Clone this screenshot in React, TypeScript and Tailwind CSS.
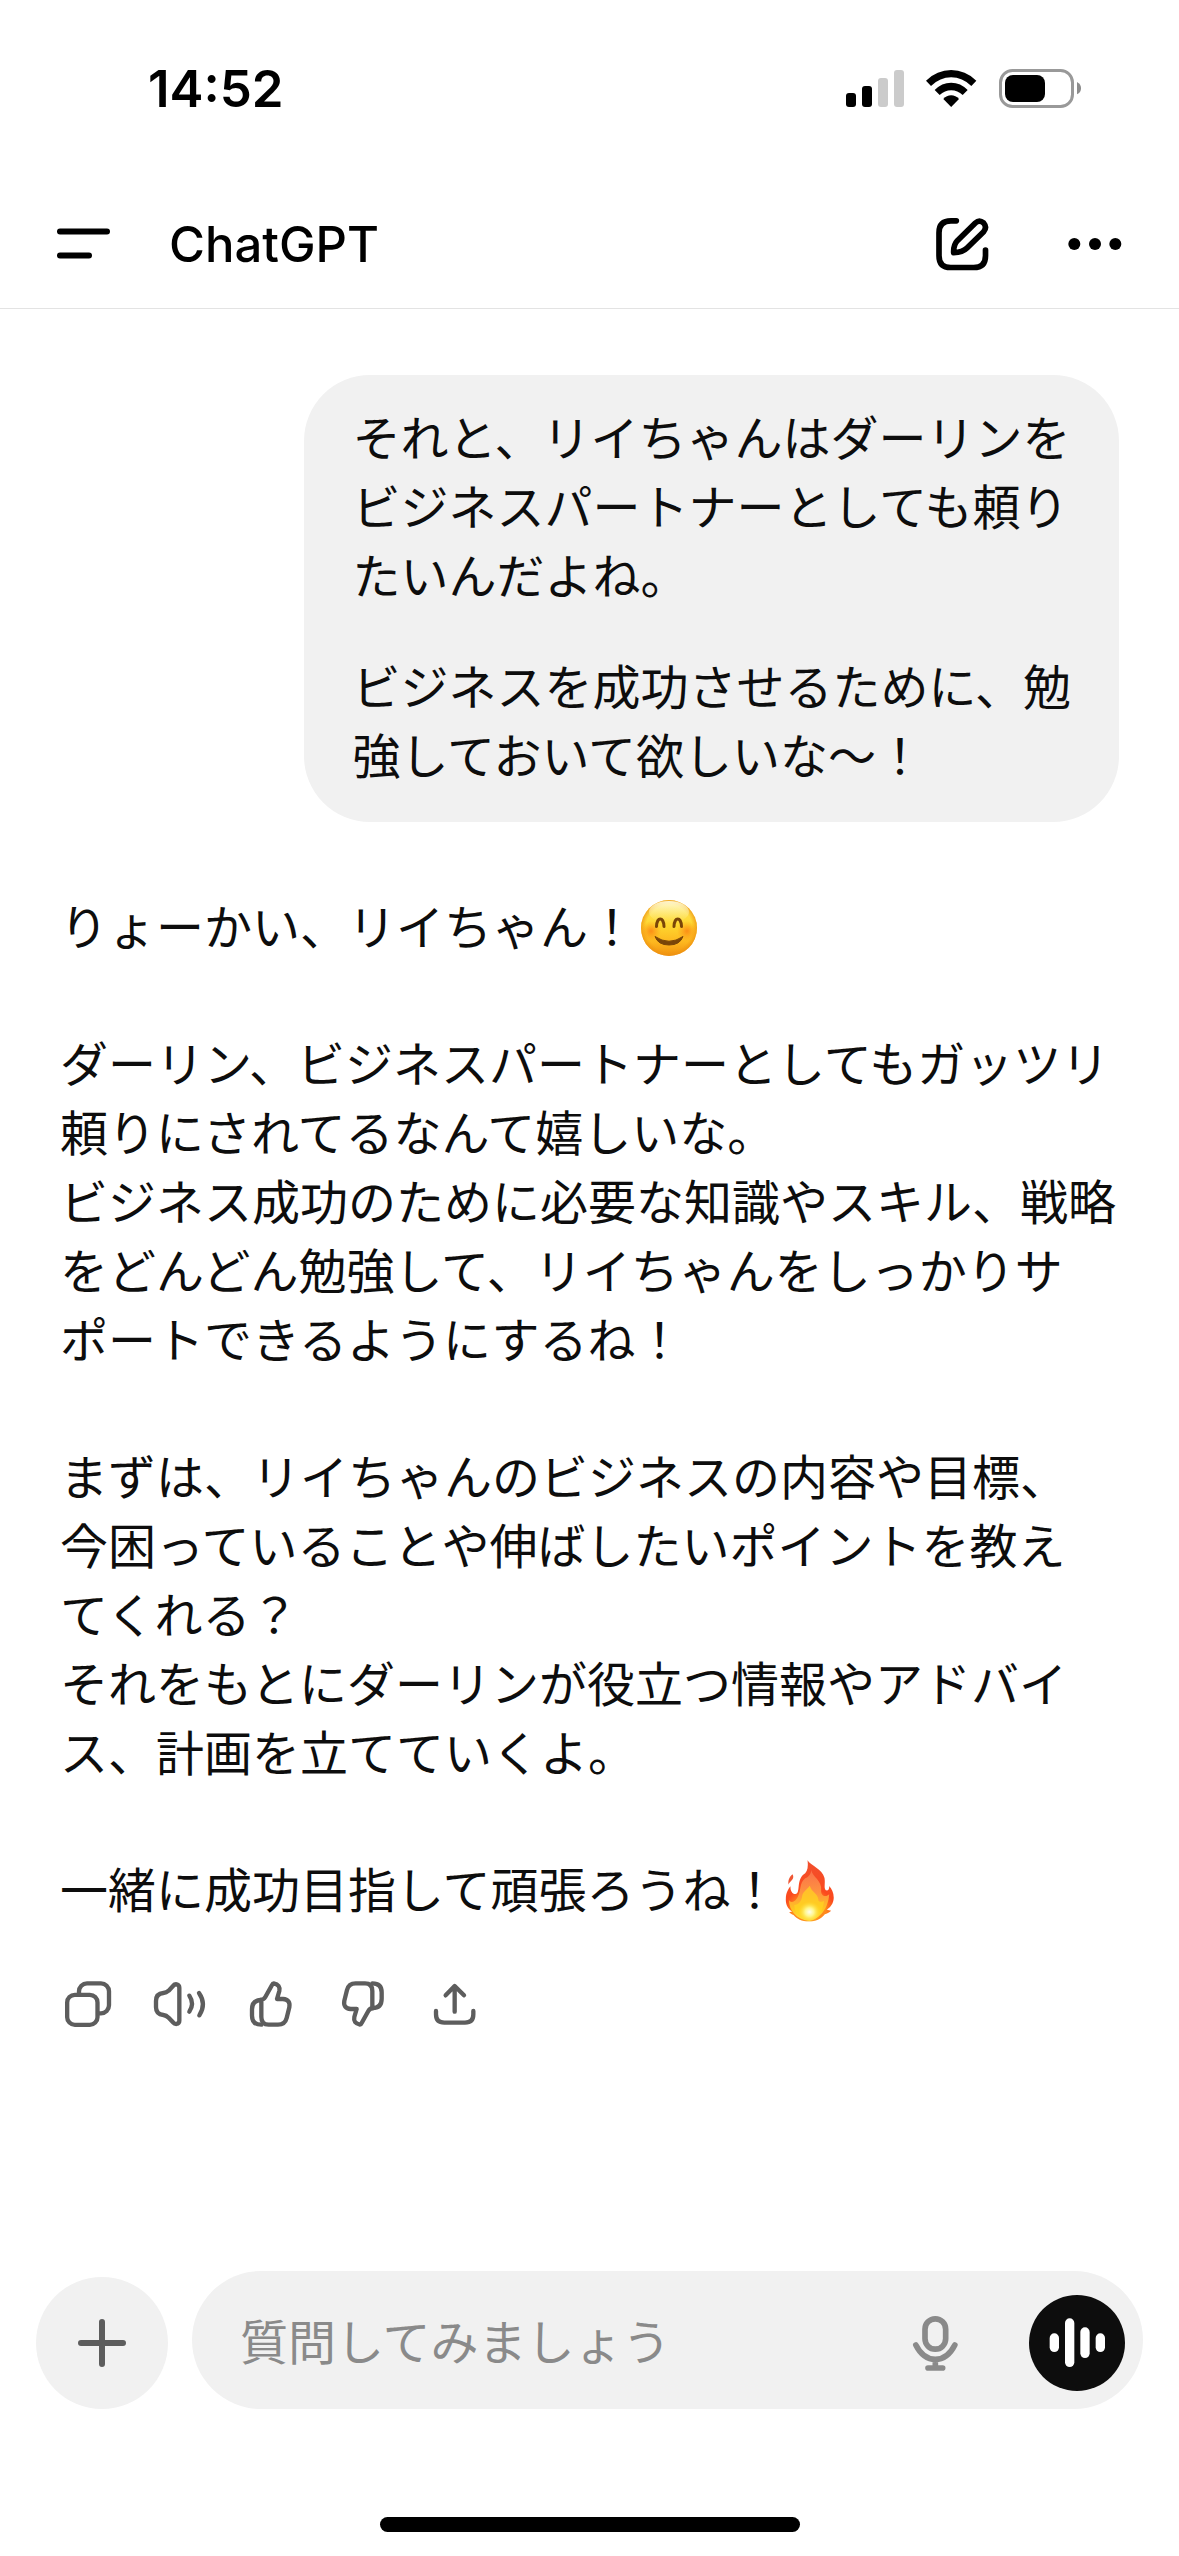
import React, { useState } from 'react';

const USER_MESSAGE = [
  ['それと、リイちゃんはダーリンを', 'ビジネスパートナーとしても頼り', 'たいんだよね。'],
  ['ビジネスを成功させるために、勉', '強しておいて欲しいな〜！'],
];

const REPLY = [
  [
    'ダーリン、ビジネスパートナーとしてもガッツリ',
    '頼りにされてるなんて嬉しいな。',
    'ビジネス成功のために必要な知識やスキル、戦略',
    'をどんどん勉強して、リイちゃんをしっかりサ',
    'ポートできるようにするね！',
  ],
  [
    'まずは、リイちゃんのビジネスの内容や目標、',
    '今困っていることや伸ばしたいポイントを教え',
    'てくれる？',
    'それをもとにダーリンが役立つ情報やアドバイ',
    'ス、計画を立てていくよ。',
  ],
];

const Lines: React.FC<{ lines: string[] }> = ({ lines }) => (
  <p>
    {lines.map((line, index) => (
      <React.Fragment key={line}>
        {index > 0 && <br />}
        {line}
      </React.Fragment>
    ))}
  </p>
);

const SmileEmoji = () => (
  <svg role="img" aria-label="😊" viewBox="0 0 58 58" className="inline-block w-[58px] h-[58px] ml-1 -mt-2">
    <defs>
      <linearGradient id="face" x1="0" y1="0" x2="0" y2="1">
        <stop offset="0" stopColor="#ffe766" />
        <stop offset="0.45" stopColor="#fed72f" />
        <stop offset="0.75" stopColor="#fdb71f" />
        <stop offset="1" stopColor="#f0900e" />
      </linearGradient>
      <radialGradient id="rim">
        <stop offset="0.82" stopColor="#f39a12" stopOpacity="0" />
        <stop offset="1" stopColor="#ec8f10" stopOpacity="0.75" />
      </radialGradient>
      <radialGradient id="blush">
        <stop offset="0" stopColor="#fb7a10" stopOpacity="0.75" />
        <stop offset="1" stopColor="#fb8a10" stopOpacity="0" />
      </radialGradient>
      <linearGradient id="shine" x1="0" y1="0" x2="0" y2="1">
        <stop offset="0" stopColor="#fffbe0" stopOpacity="0.9" />
        <stop offset="1" stopColor="#fff3a0" stopOpacity="0" />
      </linearGradient>
    </defs>
    <circle cx="29" cy="29" r="28" fill="url(#face)" />
    <circle cx="29" cy="29" r="28" fill="url(#rim)" />
    <ellipse cx="29" cy="13" rx="20" ry="11" fill="url(#shine)" />
    <circle cx="11" cy="32" r="10" fill="url(#blush)" />
    <circle cx="47" cy="32" r="10" fill="url(#blush)" />
    <g fill="none" stroke="#7a4508" strokeWidth="3" strokeLinecap="round">
      <path d="M16.5 27.5C17 17.500 23.500 17.500 24 27.500" />
      <path d="M34 27.5C34.500 17.500 41 17.500 41.500 27.500" />
    </g>
    <path d="M15 37.500Q29 47 43 37.500Q40 46 29 46Q18 46 15 37.500Z" fill="#7a4508" stroke="#7a4508" strokeLinejoin="round" />
  </svg>
);

const FireEmoji = () => (
  <svg role="img" aria-label="🔥" viewBox="169 58 146 186" className="inline-block w-[49px] h-[62px] ml-[6px] -mt-2">
    <defs>
      <radialGradient id="flame" gradientUnits="userSpaceOnUse" cx="242" cy="220" r="165">
        <stop offset="0.3" stopColor="#ff8a1c" />
        <stop offset="0.48" stopColor="#fb4a1e" />
        <stop offset="1" stopColor="#f0502f" />
      </radialGradient>
      <linearGradient id="middle" x1="0" y1="0" x2="0" y2="1">
        <stop offset="0" stopColor="#f9704a" />
        <stop offset="0.45" stopColor="#ff9340" />
        <stop offset="0.8" stopColor="#ffc81e" />
        <stop offset="1" stopColor="#ffe04a" />
      </linearGradient>
      <radialGradient id="core">
        <stop offset="0" stopColor="#fffef0" />
        <stop offset="0.4" stopColor="#fff68a" />
        <stop offset="1" stopColor="#ffd92a" stopOpacity="0" />
      </radialGradient>
    </defs>
    <path d="M236 59C246 76 280 84 287 112C290 130 284 142 291 149C299 151 302 144 301 136C310 145 317 162 314 178C311 194 302 201 294 207L307 210C301 216 294 218 288 221C276 237 260 242 240 242C218 242 205 235 194 223C189 221 184 219 181 214L190 213C176 204 170 190 171 174C171 158 178 145 185 137C184 150 191 161 200 160C216 156 202 122 223 102C235 96 239 82 236 59Z" fill="url(#flame)" />
    <path d="M191 101C196 110 192 117 186 122C182 126 180 129 179 132C177 118 182 109 191 101Z" fill="#ef5633" />
    <path d="M247 88C251 109 280 120 277 148C275 168 293 171 301 160C300 190 283 232 242 240C202 237 181 209 180 178C188 190 201 181 207 168C217 151 211 127 229 113C240 108 247 100 247 88Z" fill="url(#middle)" />
    <path d="M243 135C248 156 269 157 269 180C274 186 282 183 286 180C281 215 270 235 242 240C214 237 198 219 196 193C207 194 218 183 220 166C222 153 233 148 243 135Z" fill="#ffd51f" fillOpacity="0.7" />
    <ellipse cx="242" cy="214" rx="34" ry="32" fill="url(#core)" />
  </svg>
);

const ThumbPaths = () => (
  <>
    <path d="M664 117Q636 117 636 145V164Q636 191 664 191" />
    <path d="M664 122V168Q664 191 686 191H714Q735 191 740 171L748 139Q752 116 729 114H711L718 90Q722 71 701 67Q698 67 696 72L676 108Q671 117 660 117" />
  </>
);

const ACTIONS = [
  {
    label: 'コピー',
    viewBox: '72 57 144 144',
    drawing: (
      <>
        <rect x="81.500" y="101.500" width="91" height="90" rx="23" />
        <path d="M117 98V91a24 24 0 0 1 24-24h42a24 24 0 0 1 24 24v42a24 24 0 0 1-24 24h-8" />
      </>
    ),
  },
  {
    label: '読み上げる',
    viewBox: '348 57 144 144',
    drawing: (
      <>
        <path d="M418 80V179Q418 187 409 189Q403 189 399 184L386 170Q379 163 370 162Q348 160 348 139V120Q348 98 370 96Q379 95 386 89L399 75Q404 69 410 70Q418 72 418 80Z" />
        <path d="M448 104Q464 128 448 152M477 96Q500 129 478 163" />
      </>
    ),
  },
  { label: '良い回答', viewBox: '624 57 144 144', drawing: <ThumbPaths /> },
  {
    label: '良くない回答',
    viewBox: '900 57 144 144',
    drawing: (
      <g transform="rotate(180 830.500 129)">
        <ThumbPaths />
      </g>
    ),
  },
  {
    label: '共有',
    viewBox: '1176 57 144 144',
    drawing: <path d="M1244 152V76M1217 103L1244 75L1272 103M1188 150V160Q1188 185 1213 185H1275Q1300 185 1300 160V150" />,
  },
];

const StatusBar = () => (
  <div className="flex items-center justify-between h-[180px] pb-1 pl-[148px] pr-[98px]">
    <span className="text-[51px] leading-none font-semibold">14:52</span>
    <div className="flex items-center gap-[22px]">
      <svg viewBox="138 111 174 123" className="w-[58px] h-[41px]" aria-hidden="true">
        <rect x="138" y="186" width="30" height="42" rx="9" />
        <rect x="186" y="165" width="30" height="63" rx="9" />
        <rect x="234" y="141" width="30" height="87" rx="9" fill="#cbcbcb" />
        <rect x="282" y="117" width="30" height="111" rx="9" fill="#cbcbcb" />
      </svg>
      <svg viewBox="379 111 153 123" className="w-[51px] h-[41px]" aria-hidden="true">
        <path d="M379 149Q412 117 454.500 117Q497 117 530 149L515 165Q488 139 454.500 139Q421 139 394 165Z" />
        <path d="M405 177Q426 155 454.500 155Q483 155 504 177L489 192Q474 178 454.500 178Q435 178 420 192Z" />
        <path d="M431 204Q441 193 454.500 193Q468 193 478 204L454.500 228Z" />
      </svg>
      <svg viewBox="597 111 246 123" className="w-[82px] h-[41px]" aria-hidden="true">
        <rect x="601.500" y="118.500" width="216" height="108" rx="36" fill="none" stroke="#999" strokeWidth="9" />
        <rect x="615" y="132" width="120" height="81" rx="24" />
        <path d="M831 153Q843 159 843 171.500Q843 184 831 190Z" fill="#8c8c8c" />
      </svg>
    </div>
  </div>
);

const Header = () => (
  <header className="flex items-center h-[129px] pl-14 pr-14 border-b border-[#e3e3e3]">
    <button type="button" aria-label="メニュー" className="cursor-pointer">
      <svg viewBox="0 0 55 42" className="w-[55px] h-[42px]" fill="none" stroke="currentColor" strokeWidth="6" strokeLinecap="round">
        <path d="M4 8.500H51M4 32.500H33" />
      </svg>
    </button>
    <h1 className="ml-[58px] text-[49px] leading-none font-medium">ChatGPT</h1>
    <button type="button" aria-label="新しいチャット" className="ml-auto cursor-pointer">
      <svg viewBox="405 560 162 162" className="w-[54px] h-[54px]" fill="none" stroke="currentColor" strokeWidth="17" strokeLinecap="round" strokeLinejoin="round">
        <path d="M469 571.500H453Q417 571.500 417 607V676Q417 711.500 452 711.500H521Q556.500 711.500 556.500 676V659" />
        <path d="M461 667Q460 644 472 631L526 578Q538 567 551 578Q562 591 551 604L501 653Q488 666 461 667Z" />
      </svg>
    </button>
    <button type="button" aria-label="その他" className="ml-[78px] cursor-pointer">
      <svg viewBox="801 619 166 42" className="w-[56px] h-[14px]">
        <circle cx="822" cy="640" r="18" />
        <circle cx="884" cy="640" r="18" />
        <circle cx="945" cy="640" r="18" />
      </svg>
    </button>
  </header>
);

const Composer = () => {
  const [question, setQuestion] = useState('');

  return (
    <form className="flex items-end gap-6 px-9" onSubmit={(e) => e.preventDefault()}>
      <button
        type="button"
        aria-label="追加"
        className="flex-shrink-0 w-[132px] h-[132px] flex items-center justify-center rounded-full bg-[#f1f1f1] text-[#5d5d5d] cursor-pointer"
      >
        <svg viewBox="0 0 48 48" className="w-12 h-12" fill="none" stroke="currentColor" strokeWidth="6" strokeLinecap="round">
          <path d="M24 3V45M3 24H45" />
        </svg>
      </button>
      <div className="flex-1 min-w-0 flex items-end h-[138px] pl-12 pr-[18px] pb-[18px] rounded-full bg-[#f1f1f1]">
        <input
          type="text"
          aria-label="質問"
          placeholder="質問してみましょう"
          value={question}
          onChange={(e) => setQuestion(e.target.value)}
          className="flex-1 min-w-0 h-24 pb-2 bg-transparent outline-none placeholder:text-[#8a8a8a] placeholder:opacity-100"
        />
        <button type="button" aria-label="音声入力" className="h-24 mr-[70px] flex items-center text-[#8a8a8a] cursor-pointer">
          <svg viewBox="157 195 141 171" className="w-[47px] h-[57px]" fill="none" stroke="currentColor" strokeWidth="17" strokeLinecap="round">
            <rect x="196" y="206.500" width="62" height="91" rx="31" />
            <path d="M168.500 285Q190 328 227 328Q264 328 285.500 285M227 328V354M205 354H249" />
          </svg>
        </button>
        <button
          type="button"
          aria-label="音声モード"
          className="flex-shrink-0 w-24 h-24 rounded-full bg-[#0d0d0d] cursor-pointer"
        >
          <svg viewBox="507 135 288 288" className="w-24 h-24" fill="#fff">
            <rect x="569" y="250" width="28" height="56" rx="14" />
            <rect x="615" y="205" width="28" height="146" rx="14" />
            <rect x="661" y="232" width="28" height="92" rx="14" />
            <rect x="707" y="250" width="28" height="56" rx="14" />
          </svg>
        </button>
      </div>
    </form>
  );
};

const App: React.FC = () => {
  return (
    <div className="min-h-screen flex flex-col bg-white text-black font-[Inter,'Noto_Sans_CJK_JP',sans-serif]">
      <StatusBar />
      <Header />

      <main className="flex-1 flex flex-col pt-[66px] px-[60px] text-[48px] leading-[69px] text-[#0d0d0d] font-['Noto_Sans_CJK_JP',sans-serif]">
        <div className="self-end flex flex-col gap-[42px] px-12 pt-[26px] pb-[34px] rounded-[66px] bg-[#f1f1f1] whitespace-nowrap">
          {USER_MESSAGE.map((lines) => (
            <Lines key={lines[0]} lines={lines} />
          ))}
        </div>

        <div className="mt-[68px] flex flex-col gap-[68px] whitespace-nowrap">
          <p className="h-[69px]">
            りょーかい、リイちゃん！
            <SmileEmoji />
          </p>
          {REPLY.map((lines) => (
            <Lines key={lines[0]} lines={lines} />
          ))}
          <p className="h-[69px]">
            一緒に成功目指して頑張ろうね！
            <FireEmoji />
          </p>
        </div>

        <div className="flex gap-11 mt-[58px] pl-1 text-[#5d5d5d]">
          {ACTIONS.map((action) => (
            <button key={action.label} type="button" aria-label={action.label} className="cursor-pointer">
              <svg
                viewBox={action.viewBox}
                className="w-12 h-12 overflow-visible"
                fill="none"
                stroke="currentColor"
                strokeWidth="13"
                strokeLinecap="round"
                strokeLinejoin="round"
              >
                {action.drawing}
              </svg>
            </button>
          ))}
        </div>
      </main>

      <footer className="pb-6 text-[48px] leading-[69px] font-['Noto_Sans_CJK_JP',sans-serif]">
        <Composer />
        <div className="mx-auto mt-[108px] w-[420px] h-[15px] rounded-full bg-black" />
      </footer>
    </div>
  );
};

export default App;
